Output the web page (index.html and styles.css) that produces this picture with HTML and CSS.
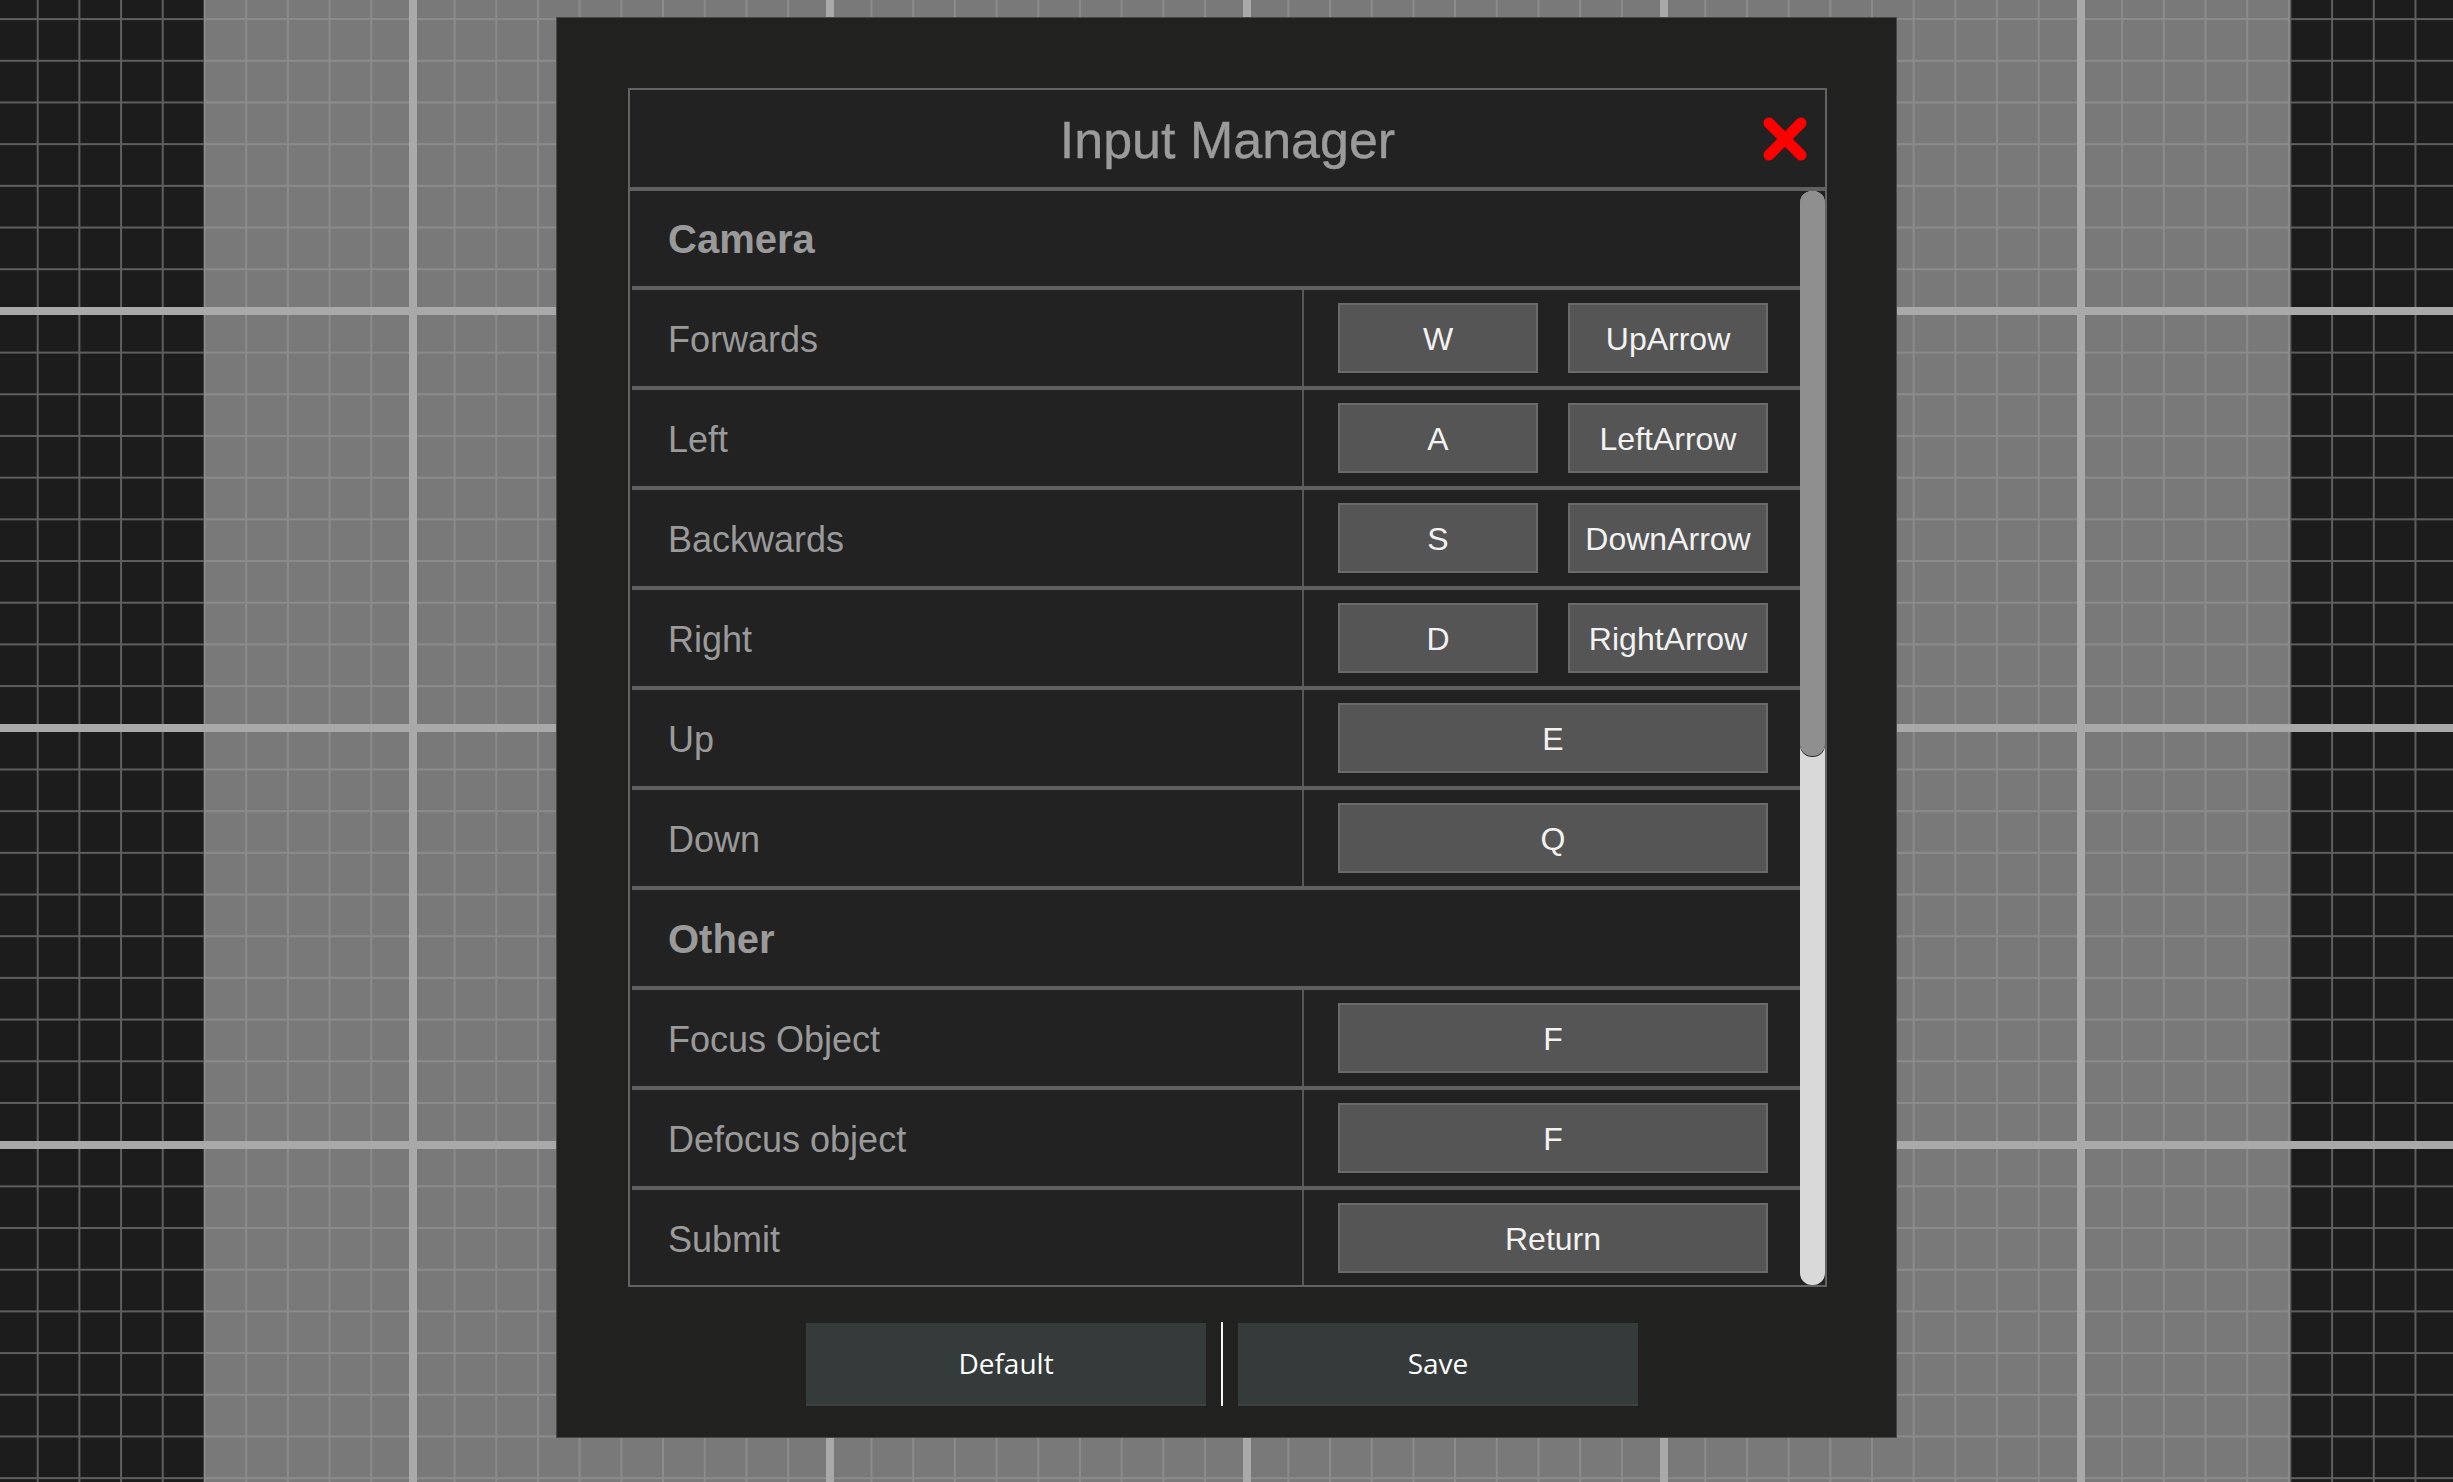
FILE: index.html
```html
<!DOCTYPE html>
<html lang="en">
<head>
<meta charset="utf-8">
<title>Input Manager</title>
<link rel="stylesheet" href="styles.css">
</head>
<body>
<div class="canvas">
  <div class="zone zone-dark zone-left"></div>
  <div class="zone zone-grid"></div>
  <div class="zone zone-dark zone-right"></div>
</div>

<div class="dialog">
  <div class="panel">
    <div class="title">
      <span></span>
      <h1 class="title-text">Input Manager</h1>
      <button class="close" aria-label="Close">
        <svg width="48" height="48" viewBox="0 0 48 48">
          <path d="M8 8 L40 40 M40 8 L8 40" stroke="#ff0000" stroke-width="11" stroke-linecap="round" fill="none"/>
        </svg>
      </button>
    </div>
    <div class="scroll">
      <div class="list">
        <div class="row header"><div class="label">Camera</div></div>
        <div class="row"><div class="label">Forwards</div><div class="keys"><button class="key">W</button><button class="key">UpArrow</button></div></div>
        <div class="row"><div class="label">Left</div><div class="keys"><button class="key">A</button><button class="key">LeftArrow</button></div></div>
        <div class="row"><div class="label">Backwards</div><div class="keys"><button class="key">S</button><button class="key">DownArrow</button></div></div>
        <div class="row"><div class="label">Right</div><div class="keys"><button class="key">D</button><button class="key">RightArrow</button></div></div>
        <div class="row"><div class="label">Up</div><div class="keys"><button class="key wide">E</button></div></div>
        <div class="row"><div class="label">Down</div><div class="keys"><button class="key wide">Q</button></div></div>
        <div class="row header"><div class="label">Other</div></div>
        <div class="row"><div class="label">Focus Object</div><div class="keys"><button class="key wide">F</button></div></div>
        <div class="row"><div class="label">Defocus object</div><div class="keys"><button class="key wide">F</button></div></div>
        <div class="row"><div class="label">Submit</div><div class="keys"><button class="key wide">Return</button></div></div>
      </div>
      <div class="scrollbar"><div class="thumb"></div></div>
    </div>
  </div>
  <div class="footer">
    <button class="action">Default</button>
    <span class="divider"></span>
    <button class="action">Save</button>
  </div>
</div>
</body>
</html>
```

FILE: styles.css
```css
html, body {
  margin: 0;
  padding: 0;
}

body {
  width: 2453px;
  height: 1482px;
  overflow: hidden;
  position: relative;
  font-family: "Liberation Sans", Arial, sans-serif;
  background: #1c1c1c;
}

/* ---------- background canvas ---------- */
.canvas {
  display: flex;
  width: 2453px;
  height: 1482px;
}

.zone {
  height: 100%;
  background-repeat: repeat;
}

.zone-dark {
  background-color: #1c1c1c;
  background-image:
    linear-gradient(to bottom, #a9a9a9 0 8px, transparent 8px),
    linear-gradient(to bottom, #5e5e5e 0 2px, transparent 2px),
    linear-gradient(to right, #5e5e5e 0 2px, transparent 2px);
  background-size: 100% 417px, 100% 41.7px, 41.7px 100%;
}

.zone-left {
  width: 204px;
  background-position: 0 307px, 0 18.1px, 36.7px 0;
}

.zone-right {
  flex: 1;
  background-position: 0 307px, 0 18.1px, -0.6px 0;
}

.zone-grid {
  width: 2086px;
  background-color: #797979;
  background-image:
    linear-gradient(to bottom, #a9a9a9 0 8px, transparent 8px),
    linear-gradient(to right, #a9a9a9 0 8px, transparent 8px),
    linear-gradient(to bottom, #8b8b8b 0 2px, transparent 2px),
    linear-gradient(to right, #8b8b8b 0 2px, transparent 2px);
  background-size: 100% 417px, 417px 100%, 100% 41.7px, 41.7px 100%;
  background-position: 0 307px, 205px 0, 0 18.1px, -0.5px 0;
}

/* ---------- dialog ---------- */
.dialog {
  position: absolute;
  left: 556px;
  top: 17px;
  width: 1341px;
  height: 1421px;
  box-sizing: border-box;
  background: #212220;
  border: 1px solid #474847;
  padding: 70px 0 0 71px;
}

.panel {
  width: 1199px;
  height: 1199px;
  box-sizing: border-box;
  border: 2px solid #636363;
  background: #222222;
  display: flex;
  flex-direction: column;
}

.title {
  height: 97px;
  flex: none;
  border-bottom: 4px solid #606060;
  display: grid;
  grid-template-columns: 1fr auto 1fr;
  align-items: center;
}

.title-text {
  margin: 0;
  padding-top: 3px;
  font-family: "Liberation Sans", Arial, sans-serif;
  font-weight: normal;
  font-size: 52px;
  color: #9b9b9b;
  line-height: 1;
  -webkit-text-stroke: 0.4px #9b9b9b;
}

.close {
  justify-self: end;
  margin-right: 16px;
  width: 48px;
  height: 48px;
  padding: 0;
  border: 0;
  background: none;
  display: flex;
}

/* ---------- scroll list ---------- */
.scroll {
  flex: 1;
  display: flex;
  overflow: hidden;
  padding-left: 2px;
}

.list {
  flex: 1;
  margin-top: -1px;
}

.row {
  height: 100px;
  box-sizing: border-box;
  border-bottom: 4px solid #606060;
  display: flex;
}

.label {
  width: 670px;
  flex: none;
  box-sizing: border-box;
  padding: 3px 0 0 36px;
  display: flex;
  align-items: center;
  font-size: 36px;
  color: #9a9a9a;
}

.row.header .label {
  font-weight: bold;
  font-size: 40px;
}

.keys {
  flex: 1;
  border-left: 2px solid #575757;
  display: flex;
  align-items: center;
  gap: 30px;
  padding-left: 34px;
}

.key {
  width: 200px;
  height: 70px;
  box-sizing: border-box;
  border: 2px solid #6a6a6a;
  background: #555555;
  color: #f2f2f2;
  font-family: "Liberation Sans", Arial, sans-serif;
  font-size: 32px;
  padding: 3px 0 0;
}

.key.wide {
  width: 430px;
}

.scrollbar {
  width: 25px;
  flex: none;
  background: #d9d9d9;
  border-radius: 12px;
  display: flex;
  flex-direction: column;
}

.thumb {
  height: 565px;
  background: #8f8f8f;
  border-radius: 12px;
  box-shadow: 0 1px 0 #2a2a2a;
}

/* ---------- footer ---------- */
.footer {
  margin-top: 35px;
  padding-left: 178px;
  display: flex;
  align-items: center;
  gap: 15px;
}

.action {
  width: 400px;
  height: 83px;
  box-sizing: border-box;
  border: 0;
  border-bottom: 2px solid #3c4242;
  background: #353a3a;
  color: #ffffff;
  font-family: "Open Sans", "Noto Sans", sans-serif;
  font-size: 28px;
  padding: 0;
}

.divider {
  width: 2px;
  height: 84px;
  background: #f5f5f5;
}
```
